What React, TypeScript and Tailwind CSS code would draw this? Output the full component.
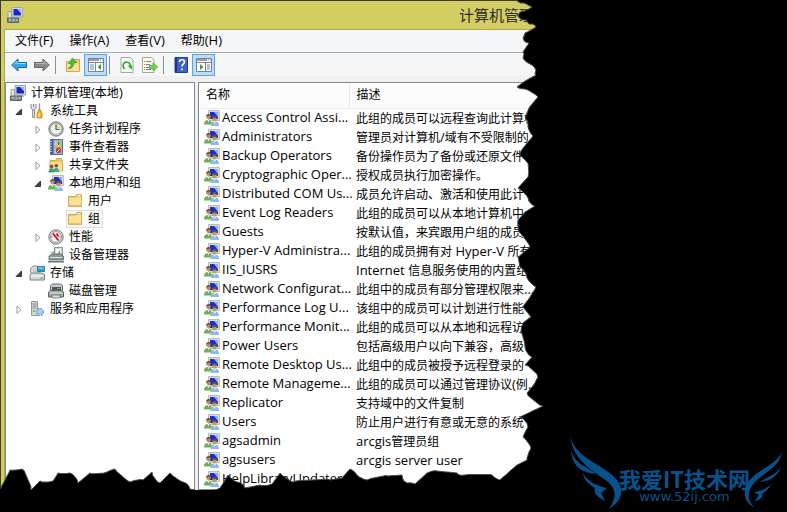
import React from "react";

const cjk = "font-['Open_Sans','Noto_Sans_CJK_SC',sans-serif]";

type Icon = () => React.ReactElement;

function Svg({ children, w = 16 }: { children: React.ReactNode; w?: number }) {
  return (
    <svg width={w} height="16" viewBox={`0 0 ${w} 16`} className="shrink-0" aria-hidden="true">
      {children}
    </svg>
  );
}

// Latin runs are set one pixel larger than the Chinese characters around them.
function Mixed({ text }: { text: string }) {
  return (
    <>
      {text.split(/([\x20-\x7e]+)/).map((part, i) =>
        i % 2 === 1 ? (
          <span key={i} className="text-[13px]">
            {part}
          </span>
        ) : (
          part
        ),
      )}
    </>
  );
}

const ComputerIcon: Icon = () => (
  <Svg>
    <path d="M5 0.5h10.5v9.5H5z" fill="#d9dbdd" stroke="#a3a6a8" />
    <path d="M6.5 2h7.500v6.500h-7.500z" fill="#1426c4" />
    <path d="M10 2h4v4.500z" fill="#8fb4ff" />
    <path d="M8 10h5l1 2H7z" fill="#a9adb2" />
    <path d="M1 4.500h3.500v7H1z" fill="#dfe3e6" stroke="#8b9096" strokeWidth=".8" />
    <path d="M0.500 11h11v4.500H.5z" fill="#7d8b91" stroke="#59666b" />
    <path d="M2 13h2m1.500 0h2m1.500 0h1.500" stroke="#d6dfe3" />
  </Svg>
);

const GroupIcon: Icon = () => (
  <Svg>
    <path d="M4.500.5h11v10h-11z" fill="#dcdcd8" stroke="#bcbcb8" />
    <path d="M6 2h8v7H6z" fill="#1730c8" />
    <path d="M10 2h4v5z" fill="#8db0f7" />
    <path d="M0 14.500c0-3 1-4.500 4-4.500s4 1.500 4 4.500z" fill="#6fae55" />
    <path d="M3.500 10l1 2.500 1-2.500z" fill="#eef5e8" />
    <circle cx="4.500" cy="6.800" r="2.300" fill="#b98a5a" />
    <path d="M2 6.800c0-3.800 5-3.800 5-.5C5.500 5 4 5.500 2 6.800z" fill="#6b4a24" />
    <path d="M6.500 16c0-3 1-4.500 4.200-4.500s4.300 1.500 4.300 4.500z" fill="#8abbe0" />
    <path d="M9.500 11.500l1.200 2.500 1.200-2.500z" fill="#f3f8fb" />
    <circle cx="10.500" cy="9" r="2.400" fill="#c79868" />
    <path d="M8 9c0-3.800 5.200-3.800 5.200 0-1.800-1.800-3.600-1-5.200 0z" fill="#7a5528" />
  </Svg>
);

const ToolsIcon: Icon = () => (
  <Svg>
    <path d="M2 1v4l2.500 2L7 5V1M3.700 7v7.500h2V7" fill="#e9e9e9" stroke="#85888b" />
    <path d="M4.500 1v3" stroke="#85888b" />
    <path d="M10.500 0.500v7" stroke="#8e9296" strokeWidth="1.300" />
    <path d="M9 7h3v2l1 1v5H8v-5l1-1z" fill="#f2b318" stroke="#b97c08" strokeWidth=".7" />
    <path d="M10 10v4" stroke="#fff0a0" />
  </Svg>
);

const ClockIcon: Icon = () => (
  <Svg>
    <circle cx="8" cy="8" r="7.200" fill="#b9bcbe" stroke="#77797c" />
    <circle cx="8" cy="8" r="5.500" fill="#f5f5ec" stroke="#8e9092" strokeWidth=".6" />
    <path d="M8.500 3.500A5 5 0 0 1 12.500 7.500h-4z" fill="#efd492" />
    <path d="M8 3.500v5h3.500" fill="none" stroke="#3b5d87" strokeWidth="1.200" />
  </Svg>
);

const EventIcon: Icon = () => (
  <Svg>
    <path d="M2.500.5h12v15h-12z" fill="#9fbbe0" stroke="#566f98" />
    <path d="M3 1h2.500v14H3z" fill="#3e5a8b" />
    <path d="M1 2.500h3M1 5h3M1 7.500h3M1 10h3M1 12.500h3" stroke="#c9d3e0" />
    <path d="M7 4h2M7 6h2M7 11h2M7 13h2" stroke="#e9f0fa" />
    <path d="M10.500 1.500L14 8H7.500z" fill="#ffe14d" stroke="#b88a00" strokeWidth=".6" />
    <path d="M10.700 3.500v2.500" stroke="#222" />
    <circle cx="10.500" cy="11.500" r="2.700" fill="#d9322a" />
    <path d="M9.300 12.700l2.400-2.400" stroke="#fff" />
  </Svg>
);

const ShareIcon: Icon = () => (
  <Svg>
    <path d="M2 3.500h5.500l1-2h5v2h1v10.500H2z" fill="#edc767" stroke="#c69a37" strokeWidth=".8" />
    <path d="M2.500 5h11.500v8.500H2.500z" fill="#f9df94" />
    <path d="M.5 15.500c0-3 1-4 3-4s3 1 3 4z" fill="#3d9d73" />
    <circle cx="3.500" cy="9.500" r="1.900" fill="#8b5c37" />
    <path d="M5.500 15c0-3 1-4 2.800-4s2.700 1 2.700 4z" fill="#3ba7a0" />
    <circle cx="8.300" cy="8.700" r="1.800" fill="#7b4f2c" />
  </Svg>
);

const FolderIcon: Icon = () => (
  <Svg>
    <path d="M1.500 3.500h7l1-2h5v12h-13z" fill="#edc767" stroke="#c79b3d" strokeWidth=".8" />
    <path d="M10.500 2.500h3" stroke="#fff" />
    <path d="M2 5h7l1-1h4.200v9.300H2z" fill="#fae199" />
    <path d="M2 12.700h12" stroke="#e0b65a" />
  </Svg>
);

const PerfIcon: Icon = () => (
  <Svg>
    <circle cx="8" cy="8" r="7.200" fill="#d9dbdc" stroke="#77797c" />
    <circle cx="8" cy="8" r="5.400" fill="#fff" stroke="#6d6f72" strokeWidth=".7" />
    <path d="M5 4.500l5.500 7M8.500 4.500l2 3" stroke="#d51313" strokeWidth="2" />
    <path d="M4 9v-2M12 9V7" stroke="#888" />
  </Svg>
);

const DeviceIcon: Icon = () => (
  <Svg>
    <path d="M6.500.5h8v9h-8z" fill="#d5dadb" stroke="#8c9394" />
    <path d="M8 2h5v4H8z" fill="#f7f9f9" />
    <path d="M10 6l2-3v4z" fill="#4fae57" />
    <path d="M1 9l3-2h9l2.500 2v4H1z" fill="#8b9798" stroke="#5e696a" strokeWidth=".8" />
    <path d="M2 10.500h12" stroke="#dde2e3" />
    <path d="M0 14h16v1.500H0z" fill="#6b7475" />
    <path d="M2 6l4-2v3z" fill="#9ba2a3" />
  </Svg>
);

const StorageIcon: Icon = () => (
  <Svg>
    <circle cx="6" cy="5.500" r="4.700" fill="#dadcde" stroke="#85898c" />
    <circle cx="6" cy="5.500" r="1.300" fill="#fff" stroke="#85898c" strokeWidth=".6" />
    <path d="M8.500 1.500h7v5h-7z" fill="#29a0d6" stroke="#176a99" strokeWidth=".8" />
    <path d="M9.500 3h5" stroke="#b7e6fa" />
    <path d="M1 9.500l2-1.500h10l2.500 1.500v5.500H1z" fill="#d4d8d9" stroke="#7c8284" />
    <path d="M2 11h12" stroke="#fff" />
    <path d="M11.500 13h2" stroke="#47ba45" strokeWidth="1.500" />
  </Svg>
);

const DiskIcon: Icon = () => (
  <Svg>
    <path d="M2.500 2.500l2-1.500h8l2 1.500v5h-12z" fill="#c8cccd" stroke="#646a6c" />
    <path d="M4 4h9v3H4z" fill="#4f5658" />
    <path d="M9 5.500h3" stroke="#49c746" />
    <path d="M.5 9l2-1.500h11l2 1.500v5H.5z" fill="#a2a8a9" stroke="#5d6365" />
    <path d="M1.500 10h13" stroke="#e5e8e9" />
    <path d="M4 12h8v3H4z" fill="#d9dcdd" stroke="#5d6365" strokeWidth=".7" />
  </Svg>
);

const ServicesIcon: Icon = () => (
  <Svg>
    <path d="M2.500.5h6v14h-6z" fill="#d3d8dc" stroke="#90979d" />
    <path d="M3.500 3h4M3.500 5h4M3.500 7h4" stroke="#7f888f" />
    <path d="M4 10h2" stroke="#4cba4b" strokeWidth="1.500" />
    <circle cx="11" cy="11" r="3.300" fill="#c2dbf0" stroke="#6b98c3" strokeWidth="1.500" strokeDasharray="1.700 .9" />
    <circle cx="11" cy="11" r="1.200" fill="#fff" stroke="#6b98c3" strokeWidth=".7" />
  </Svg>
);

const BackIcon: Icon = () => (
  <Svg>
    <path d="M.7 8l6.300-6v3.500h8.500v5H7V14z" fill="#2fa7e8" stroke="#1668a8" />
    <path d="M2.500 7.500L6 4.500v2h8.500" fill="none" stroke="#8edcff" />
  </Svg>
);
const ForwardIcon: Icon = () => (
  <Svg>
    <path d="M15.300 8L9 2v3.500H.5v5H9V14z" fill="#8b8b8b" stroke="#626262" />
    <path d="M1.500 6.500H10v-2l3 3" fill="none" stroke="#bcbcbc" />
  </Svg>
);
const UpIcon: Icon = () => (
  <Svg>
    <path d="M1.500 4.500h6l1-2h6v12h-13z" fill="#f1ce76" stroke="#c79b3d" strokeWidth=".8" />
    <path d="M2 7h12v7H2z" fill="#f9df9a" />
    <path d="M3 11.500c2.500-1 3-3 3-5L3.500 6.500 7.500 1 12 5.500H9c0 4-2.500 6.500-6 6z" fill="#4cc22f" stroke="#2b8e1c" strokeWidth=".6" />
  </Svg>
);
const TreePaneIcon: Icon = () => (
  <Svg>
    <path d="M.5 1.500h15v13H.5z" fill="#fff" stroke="#7b8190" />
    <path d="M1 3h10" stroke="#747c8c" strokeWidth="1.500" />
    <path d="M12 3h3" stroke="#7b8190" strokeDasharray="1 1" />
    <path d="M1 5.500h14M7.500 6v8" stroke="#7b8190" />
    <path d="M2 8h4M2 10h4M2 12h4" stroke="#5d87c6" />
    <path d="M13 7v6L9.500 10z" fill="#34a52c" />
  </Svg>
);
const ActionPaneIcon: Icon = () => (
  <Svg>
    <path d="M.5 1.500h15v13H.5z" fill="#fff" stroke="#7b8190" />
    <path d="M1 3h10" stroke="#747c8c" strokeWidth="1.500" />
    <path d="M12 3h3" stroke="#7b8190" strokeDasharray="1 1" />
    <path d="M1 5.500h14M9.500 6v8" stroke="#7b8190" />
    <path d="M11 8h3M11 10h3M11 12h3" stroke="#5d87c6" />
    <path d="M4 7v6l3.500-3z" fill="#34a52c" />
  </Svg>
);
const RefreshIcon: Icon = () => (
  <Svg>
    <path d="M2 .5h9.500l2.500 2.500v12.500H2z" fill="#fbfbfb" stroke="#a4a8a9" />
    <path d="M6 12A3.700 3.700 0 1 1 11 10.500" fill="none" stroke="#3cac35" strokeWidth="1.800" />
    <path d="M8.500 8.500h4.500v4.500z" fill="#3cac35" />
  </Svg>
);
const ExportIcon: Icon = () => (
  <Svg>
    <path d="M.5.5h9L12 3v12.500H.5z" fill="#fdfbe9" stroke="#a7a797" />
    <path d="M2 4.500h1m1 0h5M2 7.500h1m1 0h4M2 10.500h1m1 0h4M2 12.500h1m1 0h5" stroke="#777c91" />
    <path d="M7.500 8.500H11V5.800L15.700 10 11 14v-2.500H7.500z" fill="#70d343" stroke="#41a127" strokeWidth=".7" />
  </Svg>
);
const HelpIcon: Icon = () => (
  <Svg>
    <path d="M2 .5h12.500v15H2z" fill="#3a61c5" stroke="#223d91" />
    <path d="M2 .5h2v15H2z" fill="#1e3688" />
    <path d="M6.500 5c0-3 5-3 5 0 0 2-2.500 2-2.500 4.500M9 11.500v1.800" fill="none" stroke="#fff" strokeWidth="1.700" />
  </Svg>
);

function Expander({ state }: { state?: "open" | "closed" }) {
  if (!state) return <span className="w-4 shrink-0" />;
  return (
    <button type="button" aria-label={state === "open" ? "折叠" : "展开"} className="flex h-4 w-4 shrink-0 items-center justify-center">
      <svg width="8" height="10" viewBox="0 0 8 10" aria-hidden="true">
        {state === "open" ? (
          <path d="M6.500 3v5.500H1z" fill="#404040" stroke="#222" strokeWidth=".8" />
        ) : (
          <path d="M2 2v7.500L6 5.750z" fill="#fff" stroke="#9c9c9c" />
        )}
      </svg>
    </button>
  );
}

type Node = { label: string; icon: Icon; state?: "open" | "closed"; selected?: boolean; children?: Node[] };

const tree: Node[] = [
  {
    label: "系统工具",
    icon: ToolsIcon,
    state: "open",
    children: [
      { label: "任务计划程序", icon: ClockIcon, state: "closed" },
      { label: "事件查看器", icon: EventIcon, state: "closed" },
      { label: "共享文件夹", icon: ShareIcon, state: "closed" },
      {
        label: "本地用户和组",
        icon: GroupIcon,
        state: "open",
        children: [
          { label: "用户", icon: FolderIcon },
          { label: "组", icon: FolderIcon, selected: true },
        ],
      },
      { label: "性能", icon: PerfIcon, state: "closed" },
      { label: "设备管理器", icon: DeviceIcon },
    ],
  },
  { label: "存储", icon: StorageIcon, state: "open", children: [{ label: "磁盘管理", icon: DiskIcon }] },
  { label: "服务和应用程序", icon: ServicesIcon, state: "closed" },
];

function Branch({ node }: { node: Node }) {
  const NodeIcon = node.icon;
  return (
    <li>
      <div className="flex h-[18px] items-center gap-0.5">
        <Expander state={node.state} />
        <span
          className={
            node.selected
              ? "flex h-4 items-center gap-[5px] bg-[#f7f7f7] pr-0.5 outline outline-[#dedede]"
              : "flex items-center gap-[5px]"
          }
        >
          <NodeIcon />
          {node.label}
        </span>
      </div>
      {node.children && (
        <ul className="ml-[19px]">
          {node.children.map((c) => (
            <Branch key={c.label} node={c} />
          ))}
        </ul>
      )}
    </li>
  );
}

const groups: [string, string][] = [
  ["Access Control Assi...", "此组的成员可以远程查询此计算机"],
  ["Administrators", "管理员对计算机/域有不受限制的"],
  ["Backup Operators", "备份操作员为了备份或还原文件"],
  ["Cryptographic Oper...", "授权成员执行加密操作。"],
  ["Distributed COM Us...", "成员允许启动、激活和使用此计"],
  ["Event Log Readers", "此组的成员可以从本地计算机中"],
  ["Guests", "按默认值，来宾跟用户组的成员"],
  ["Hyper-V Administra...", "此组的成员拥有对 Hyper-V 所有"],
  ["IIS_IUSRS", "Internet 信息服务使用的内置组"],
  ["Network Configurat...", "此组中的成员有部分管理权限来..."],
  ["Performance Log U...", "该组中的成员可以计划进行性能"],
  ["Performance Monit...", "此组的成员可以从本地和远程访"],
  ["Power Users", "包括高级用户以向下兼容，高级"],
  ["Remote Desktop Us...", "此组中的成员被授予远程登录的"],
  ["Remote Manageme...", "此组的成员可以通过管理协议(例..."],
  ["Replicator", "支持域中的文件复制"],
  ["Users", "防止用户进行有意或无意的系统"],
  ["agsadmin", "arcgis管理员组"],
  ["agsusers", "arcgis server user"],
  ["HelpLibraryUpdaters", ""],
];

const tornEdge: [number, number][] = [
  [517, 0], [524, 3], [532, 7], [529, 9], [520, 12], [518, 16], [526, 20], [529, 24], [536, 27], [525, 33], [523, 38], [529, 43],
  [523, 52], [523, 58], [530, 64], [536, 70], [536, 75], [527, 80], [517, 87], [525, 89], [538, 97], [529, 108],
  [525, 118], [528, 127], [533, 136], [523, 148], [520, 155], [527, 162], [528, 177], [518, 188], [528, 198],
  [535, 206], [525, 212], [518, 220], [519, 232], [530, 247], [518, 257], [520, 267], [527, 278], [536, 287],
  [528, 300], [523, 307], [531, 317], [523, 323], [521, 332], [525, 347], [532, 357], [525, 365], [538, 377],
  [535, 383], [527, 393], [543, 406], [520, 417], [528, 427], [523, 437], [531, 448], [527, 460], [517, 465],
  [500, 480], [492, 475], [465, 475], [457, 473], [437, 471], [427, 473], [415, 484], [407, 483], [402, 475],
  [388, 476], [367, 480], [357, 475], [350, 469], [342, 478], [330, 480], [293, 482], [280, 473], [272, 484],
  [260, 485], [245, 488], [237, 482], [228, 475], [220, 488], [203, 492], [190, 489], [183, 482], [170, 473],
  [160, 483], [152, 472], [143, 480], [130, 482], [115, 469], [107, 472], [90, 473], [78, 483], [70, 473],
  [58, 473], [53, 481], [40, 481], [31, 490], [22, 469], [10, 470], [0, 489],
];

// Adds small repeatable teeth between the main points of the tear.
function roughen(points: [number, number][]) {
  const out: string[] = [];
  points.forEach(([x, y], i) => {
    out.push(`${x},${y}`);
    const next = points[i + 1];
    if (!next) return;
    const steps = Math.max(1, Math.round(Math.hypot(next[0] - x, next[1] - y) / 3));
    for (let s = 1; s < steps; s++) {
      const t = s / steps;
      const j = ((i * 7 + s * 5) % 5) / 2 - 1;
      out.push(`${(x + (next[0] - x) * t + j).toFixed(1)},${(y + (next[1] - y) * t - j).toFixed(1)}`);
    }
  });
  return out.join(" ");
}

const edge = roughen(tornEdge);

function Divider() {
  return <span className="mr-[5px] ml-0.5 h-[18px] w-px bg-[#8d8d8d]" />;
}

function Tool({ icon: ToolIcon, label, active }: { icon: Icon; label: string; active?: boolean }) {
  return (
    <button
      type="button"
      aria-label={label}
      className={
        active
          ? "flex h-[22px] w-[23px] items-center justify-center border border-[#5ba3e6] bg-[#bfdcf7]"
          : "flex h-[22px] w-[23px] items-center justify-center"
      }
    >
      <ToolIcon />
    </button>
  );
}

function Watermark() {
  return (
    <div className="flex items-end pr-1 text-[#07528c]">
      <svg width="54" height="76" viewBox="0 0 54 76" fill="currentColor" aria-hidden="true">
        <path d="M0 0C5 20 26 26 41 38C54 48 56 62 39 73C48 60 46 51 34 43C19 32 3 23 0 0Z" />
        <path d="M1 14C5 29 17 30 26 38C14 37 2 32 1 14Z" />
        <path d="M13 37C18 46 27 50 37 52L31 57L35 65C26 60 23 56 25 52C18 48 14 44 13 37Z" />
      </svg>
      <div className="-mx-[5px] flex flex-col items-center pb-2">
        <span className="font-['Noto_Sans_CJK_SC',sans-serif] text-[22px] leading-6 font-bold whitespace-nowrap">我爱IT技术网</span>
        <span className="font-['DejaVu_Sans',sans-serif] text-[13px] leading-[14px]">www.52ij.com</span>
      </div>
      <svg width="38" height="60" viewBox="0 0 38 60" fill="currentColor" aria-hidden="true">
        <path d="M37 0C34 16 19 20 9 31C1 40 3 49 9 55C-1 51-3 38 3 30C13 17 30 14 37 0Z" />
        <path d="M36 14C33 25 24 29 15 30C23 24 32 23 36 14Z" />
        <path d="M27 31C24 37 20 40 17 42C18 46 15 48 10 49L14 43L9 40C16 39 22 37 27 31Z" />
      </svg>
    </div>
  );
}

const menus = ["文件(F)", "操作(A)", "查看(V)", "帮助(H)"];

export default function App() {
  return (
    <main className={`flex min-h-screen items-start justify-between overflow-hidden bg-black text-[12px] text-black ${cjk}`}>
      <section className="relative w-full max-w-[545px] shrink-0 overflow-hidden">
        <div className="max-h-[494px] overflow-hidden border-t border-l border-[#3d3b3c] bg-[#d4cd62] pl-[3px]">
          <header className="flex h-[28px] items-center pl-[3px]">
            <ComputerIcon />
            <h1 className="ml-[436px] text-[15px] leading-7 whitespace-nowrap text-[#2c2c24]">计算机管理</h1>
          </header>
          <div className="border-t border-l border-[#aba64f] bg-[#f0f0f0]">
            <nav className="flex h-[23px] items-center gap-4 border-b border-[#adadad] bg-[#f5f6f7] pl-[10px] whitespace-nowrap">
              {menus.map((m) => (
                <button key={m} type="button">
                  <Mixed text={m} />
                </button>
              ))}
            </nav>
            <div className="flex h-[23px] items-center bg-[#f5f6f7] pl-0.5">
              <Tool icon={BackIcon} label="后退" />
              <Tool icon={ForwardIcon} label="前进" />
              <Divider />
              <Tool icon={UpIcon} label="向上" />
              <Tool icon={TreePaneIcon} label="显示/隐藏控制台树" active />
              <Divider />
              <Tool icon={RefreshIcon} label="刷新" />
              <Tool icon={ExportIcon} label="导出列表" />
              <Divider />
              <Tool icon={HelpIcon} label="帮助" />
              <Tool icon={ActionPaneIcon} label="显示/隐藏操作窗格" active />
            </div>
            <div className="mt-1.5 flex gap-[3px]">
              <div className="w-[190px] shrink-0 border border-[#828790] bg-white pt-px whitespace-nowrap">
                <div className="flex h-[18px] items-center gap-[5px] pl-1">
                  <ComputerIcon />
                  <span>
                    <Mixed text="计算机管理(本地)" />
                  </span>
                </div>
                <ul className="ml-[5px]">
                  {tree.map((n) => (
                    <Branch key={n.label} node={n} />
                  ))}
                </ul>
              </div>
              <div className="min-w-0 flex-1 overflow-hidden border border-[#828790] bg-white">
                <table className="w-full table-fixed border-collapse text-left whitespace-nowrap">
                  <thead>
                    <tr className="h-[25px] border-b border-[#e3edf5] bg-[#fcfcfc]">
                      <th className="w-[150px] border-r border-[#dfeaf5] p-0 pl-[7px] font-normal">名称</th>
                      <th className="p-0 pl-[7px] font-normal">描述</th>
                    </tr>
                  </thead>
                  <tbody>
                    {groups.map(([name, description]) => (
                      <tr key={name}>
                        <td className="h-[19px] p-0 pl-[5px]">
                          <span className="flex h-[19px] items-center gap-0.5 text-[13px]">
                            <GroupIcon />
                            {name}
                          </span>
                        </td>
                        <td className="h-[19px] p-0 pl-[7px]">
                          <div className="h-[19px] leading-[19px]">
                            <Mixed text={description} />
                          </div>
                        </td>
                      </tr>
                    ))}
                  </tbody>
                </table>
              </div>
            </div>
          </div>
        </div>
        <svg width="546" height="512" viewBox="0 0 546 512" className="absolute top-0 left-0" aria-hidden="true">
          <polygon points={`546,0 ${edge} 0,512 546,512`} fill="#000" />
          <polyline points={edge} fill="none" stroke="#4a4a4a" strokeWidth="1" />
        </svg>
      </section>
      <aside className="self-end">
        <Watermark />
      </aside>
    </main>
  );
}
